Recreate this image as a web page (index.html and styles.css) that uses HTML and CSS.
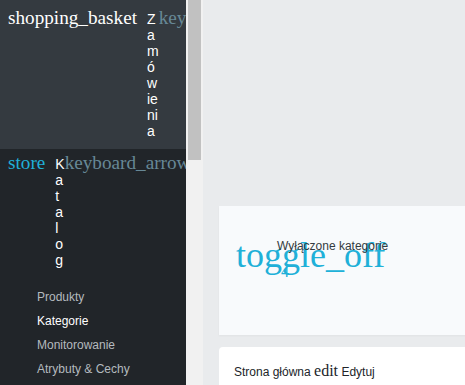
FILE: index.html
```html
<!DOCTYPE html>
<html lang="pl">

<head>
  <meta charset="UTF-8">
  <meta name="viewport" content="width=device-width, initial-scale=1.0">
  <title>Kategorie</title>
  <link rel="stylesheet" href="styles.css">
</head>

<body>
  <div class="layout">

    <!-- Sidebar -->
    <aside class="sidebar">
      <nav class="sidebar-nav">
        <div class="nav-group">
          <a class="nav-link" href="#">
            <i class="material-icons nav-icon">shopping_basket</i>
            <span class="nav-label">Zamówienia</span>
            <i class="material-icons nav-arrow">keyboard_arrow_down</i>
          </a>
        </div>

        <div class="nav-group open">
          <a class="nav-link" href="#">
            <i class="material-icons nav-icon">store</i>
            <span class="nav-label">Katalog</span>
            <i class="material-icons nav-arrow">keyboard_arrow_down</i>
          </a>
          <ul class="submenu">
            <li><a href="#">Produkty</a></li>
            <li><a href="#" class="active">Kategorie</a></li>
            <li><a href="#">Monitorowanie</a></li>
            <li><a href="#">Atrybuty &amp; Cechy</a></li>
          </ul>
        </div>

        <div class="nav-group">
          <a class="nav-link" href="#">
            <i class="material-icons nav-icon">people</i>
            <span class="nav-label">Klienci</span>
            <i class="material-icons nav-arrow">keyboard_arrow_down</i>
          </a>
        </div>

        <div class="nav-group">
          <a class="nav-link" href="#">
            <i class="material-icons nav-icon">settings</i>
            <span class="nav-label">Ustawienia</span>
            <i class="material-icons nav-arrow">keyboard_arrow_down</i>
          </a>
        </div>
      </nav>

      <!-- scrollbar of the menu -->
      <div class="scrollbar">
        <div class="scrollbar-thumb"></div>
      </div>
    </aside>

    <!-- Main content -->
    <main class="content">
      <div class="stat-card">
        <i class="material-icons stat-icon">toggle_off</i>
        <div class="stat-body">
          <p class="stat-title">Wyłączone kategorie</p>
          <p class="stat-value">4</p>
        </div>
      </div>

      <div class="list-card">
        Strona główna
        <a href="#" class="edit-link"><i class="material-icons">edit</i> Edytuj</a>
      </div>
    </main>

  </div>
</body>

</html>
```

FILE: styles.css
```css
/* Reset */
* {
  margin: 0;
  padding: 0;
  box-sizing: border-box;
}

body {
  font-family: "Liberation Sans", Arial, sans-serif;
  font-size: 12px;
  background-color: #e9ebed;
  color: #212529;
  overflow: hidden;
}

a {
  color: inherit;
  text-decoration: none;
}

/* icon font is not available, the ligature names show as text */
.material-icons {
  font-family: "Liberation Serif", serif;
  font-style: normal;
  white-space: nowrap;
  flex-shrink: 0;
}

.layout {
  display: flex;
  height: 100vh;
}

/* Sidebar */
.sidebar {
  width: 203px;
  flex-shrink: 0;
  display: flex;
  overflow: hidden;
}

.sidebar-nav {
  flex: 1;
  min-width: 0;
  overflow: hidden;
  background-color: #343a40;
  padding-top: 4px;
}

.scrollbar {
  flex: 0 0 17px;
  padding: 0 2px;
  background-color: #f1f1f1;
}

.scrollbar-thumb {
  height: 160px;
  background-color: #c1c1c1;
}

.nav-group {
  padding-bottom: 4px;
}

.nav-group.open {
  padding-bottom: 0;
  background-color: #212529;
}

.nav-link {
  display: flex;
  align-items: baseline;
  padding: 2.5px 8px 6.5px;
  color: #fff;
}

.nav-icon {
  font-size: 19.2px;
  margin-right: 10px;
}

.open .nav-icon {
  color: #20b0d8;
}

.nav-label {
  font-size: 14px;
  overflow-wrap: anywhere;
}

.nav-arrow {
  font-size: 19.2px;
  color: #678896;
}

.submenu {
  list-style: none;
  padding: 11px 0 8px 37px;
}

.submenu a {
  display: block;
  line-height: 24px;
  font-size: 12px;
  color: #b4babf;
}

.submenu a.active {
  color: #fff;
}

/* Main */
.content {
  flex: 1;
  min-width: 0;
  overflow: hidden;
  padding: 206px 0 0 16px;
}

.stat-card {
  display: flex;
  gap: 5px;
  width: 320px;
  height: 129px;
  padding: 28px 17px;
  background-color: #f8fafc;
  box-shadow: 0 1px 2px rgba(0, 0, 0, 0.04);
}

.stat-icon {
  width: 36px;
  font-size: 36px;
  color: #20b0d8;
}

.stat-body {
  margin-top: 5px;
}

.stat-title {
  color: #343a40;
}

.stat-value {
  font-family: "Liberation Serif", serif;
  font-size: 16px;
  color: #20b0d8;
  margin: 10px 0 0 4px;
}

.list-card {
  width: 320px;
  margin-top: 12px;
  padding: 15px 15px 13px;
  background-color: #fff;
  border-radius: 4px;
  color: #212529;
}

.edit-link .material-icons {
  font-size: 16px;
}
```
